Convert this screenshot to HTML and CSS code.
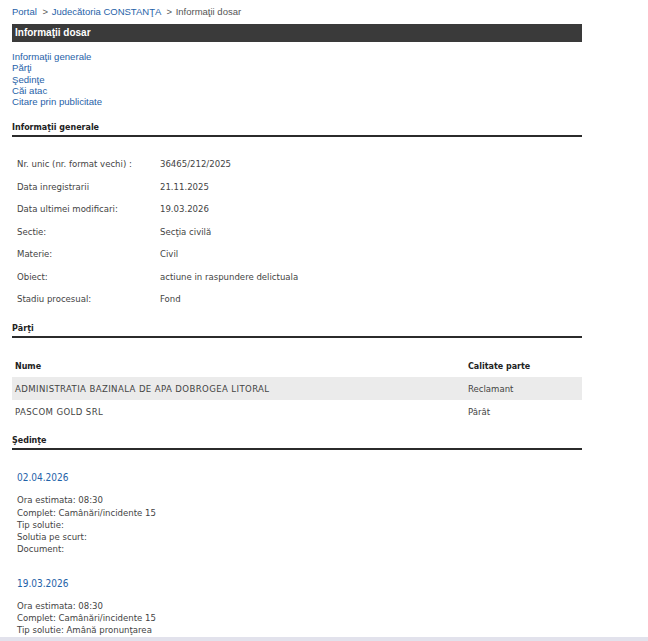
FILE: index.html
```html
<!DOCTYPE html>
<html lang="ro">
<head>
    <meta charset="UTF-8">
    <title>Informații dosar</title>
    <link rel="stylesheet" href="styles.css">
</head>
<body>
    <div class="page">
        <div class="breadcrumb">
            <a href="#">Portal</a> <span class="sep">&gt;</span> <a href="#">Judecătoria CONSTANŢA</a> <span class="sep">&gt;</span> <span class="current">Informaţii dosar</span>
        </div>

        <div class="title-bar">Informaţii dosar</div>

        <div class="nav-links">
            <a href="#">Informaţii generale</a>
            <a href="#">Părţi</a>
            <a href="#">Şedinţe</a>
            <a href="#">Căi atac</a>
            <a href="#">Citare prin publicitate</a>
        </div>

        <h2 class="section-title">Informaţii generale</h2>
        <table class="info-table">
            <tr><td class="label">Nr. unic (nr. format vechi) :</td><td>36465/212/2025</td></tr>
            <tr><td class="label">Data inregistrarii</td><td>21.11.2025</td></tr>
            <tr><td class="label">Data ultimei modificari:</td><td>19.03.2026</td></tr>
            <tr><td class="label">Sectie:</td><td>Secţia civilă</td></tr>
            <tr><td class="label">Materie:</td><td>Civil</td></tr>
            <tr><td class="label">Obiect:</td><td>actiune in raspundere delictuala</td></tr>
            <tr><td class="label">Stadiu procesual:</td><td>Fond</td></tr>
        </table>

        <h2 class="section-title">Părţi</h2>
        <table class="parti-table">
            <tr class="head"><th>Nume</th><th class="calitate">Calitate parte</th></tr>
            <tr class="odd"><td class="nume">ADMINISTRATIA BAZINALA DE APA DOBROGEA LITORAL</td><td class="calitate">Reclamant</td></tr>
            <tr><td class="nume">PASCOM GOLD SRL</td><td class="calitate">Pârât</td></tr>
        </table>

        <h2 class="section-title">Şedinţe</h2>
        <div class="sedinta">
            <div class="sedinta-date">02.04.2026</div>
            <div class="sedinta-info">
                Ora estimata: 08:30<br>
                Complet: Camânări/incidente 15<br>
                Tip solutie:<br>
                Solutia pe scurt:<br>
                Document:
            </div>
        </div>
        <div class="sedinta">
            <div class="sedinta-date">19.03.2026</div>
            <div class="sedinta-info">
                Ora estimata: 08:30<br>
                Complet: Camânări/incidente 15<br>
                Tip solutie: Amână pronunţarea
            </div>
        </div>
    </div>
    <div class="bottom-strip"></div>
</body>
</html>
```

FILE: styles.css
```css
body {
    margin: 0;
    background: #ffffff;
    font-family: 'DejaVu Sans Condensed', 'DejaVu Sans', Verdana, sans-serif;
    color: #333333;
    overflow: hidden;
}

a {
    color: #1f62a8;
    text-decoration: none;
}

.page {
    width: 570px;
    padding: 5px 0 0 12px;
}

.breadcrumb {
    font-family: 'Liberation Sans', Arial, sans-serif;
    font-size: 9.5px;
    line-height: 13px;
    color: #555555;
}

.breadcrumb .sep {
    margin: 0 1px 0 3px;
}

.title-bar {
    margin-top: 6px;
    height: 18px;
    line-height: 18px;
    background: #3a3a3a;
    color: #ffffff;
    font-family: 'Liberation Sans', Arial, sans-serif;
    font-size: 10px;
    font-weight: bold;
    padding-left: 3px;
}

.nav-links {
    margin-top: 9px;
    padding-bottom: 2px;
    font-family: 'Liberation Sans', Arial, sans-serif;
    font-size: 9.6px;
    line-height: 11.3px;
}

.nav-links a {
    display: block;
}

.section-title {
    margin: 12px 0 0;
    padding-bottom: 2px;
    border-bottom: 2px solid #2b2b2b;
    font-size: 8.9px;
    font-weight: bold;
    color: #222222;
    line-height: 12px;
}

.info-table {
    border-collapse: collapse;
    margin: 15px 0 0;
    font-size: 9.5px;
    color: #444444;
}

.info-table td {
    height: 22.5px;
    padding: 0 0 0 5px;
    vertical-align: middle;
}

.info-table td.label {
    width: 138px;
}

.parti-table {
    width: 570px;
    border-collapse: collapse;
    margin: 17px 0 0;
    font-size: 9.5px;
    color: #444444;
}

.parti-table th,
.parti-table td {
    height: 22.5px;
    padding: 0 0 0 3px;
    text-align: left;
    vertical-align: middle;
}

.parti-table th {
    font-size: 8.9px;
    font-weight: bold;
    color: #222222;
}

.parti-table td.nume {
    letter-spacing: 0.4px;
}

.parti-table .calitate {
    width: 114px;
}

.parti-table tr.odd {
    background: #ebebeb;
}

.sedinta {
    padding: 21px 0 0 5px;
    font-size: 9.5px;
    color: #444444;
}

.sedinta-date {
    color: #1f62a8;
    font-size: 10px;
    line-height: 13px;
}

.sedinta-info {
    margin-top: 10px;
    line-height: 12.2px;
}

.bottom-strip {
    position: fixed;
    left: 0;
    right: 0;
    bottom: 0;
    height: 4px;
    background: #e2e2ec;
}
```
